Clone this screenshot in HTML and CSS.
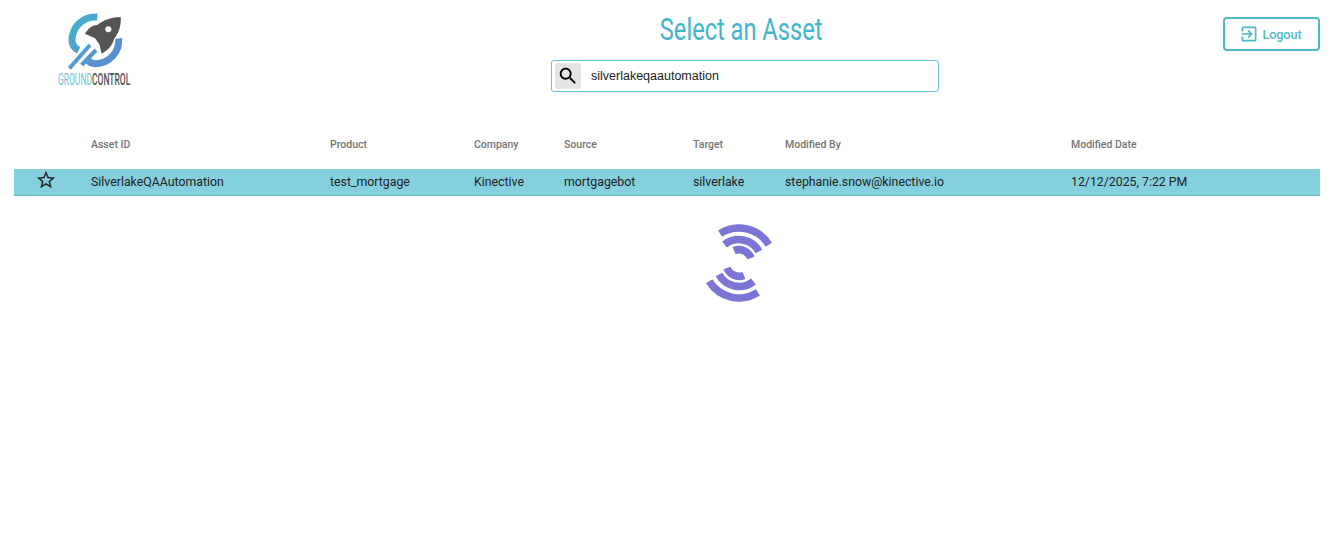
FILE: index.html
```html
<!DOCTYPE html>
<html lang="en">
<head>
    <meta charset="UTF-8">
    <meta name="viewport" content="width=device-width, initial-scale=1.0">
    <title>Select an Asset</title>
    <link rel="stylesheet" href="styles.css">
</head>
<body>
    <header class="page-header">
        <div class="logo">
            <svg class="logo-mark" viewBox="0 0 330 195" aria-hidden="true">
                <defs>
                    <linearGradient id="logoBlue" gradientUnits="userSpaceOnUse" x1="85" y1="40" x2="240" y2="185">
                        <stop offset="0" stop-color="#45b2cd"/>
                        <stop offset="1" stop-color="#5f86d3"/>
                    </linearGradient>
                </defs>
                <g fill="none" stroke="url(#logoBlue)">
                    <path stroke-width="21" d="M172 36 A70 70 0 0 0 96 106 C96 120 104 130 116 136"/>
                    <path stroke-width="21" d="M236 100 A70 70 0 0 1 166 176 C155 176 148 172 142 165"/>
                    <path stroke-width="12" d="M88 190 L150 120"/>
                    <path stroke-width="12" d="M125 180 L168 135"/>
                </g>
                <path class="logo-rocket" d="M242 36 C244 62 236 84 222 102 C218 120 205 135 185 146 L178 118 L165 100 L135 86 C145 70 158 60 172 60 C190 45 215 36 242 36 Z"/>
                <circle cx="205" cy="73" r="9" fill="#fff"/>
            </svg>
            <div class="logo-text"><span class="logo-ground">GROUND</span><span class="logo-control">CONTROL</span></div>
        </div>
        <div class="header-center">
            <h1 class="page-title">Select an Asset</h1>
            <div class="search-box">
                <span class="search-icon">
                    <svg viewBox="0 0 24 24" width="22" height="22"><path d="M15.5 14h-.79l-.28-.27C15.41 12.59 16 11.11 16 9.5 16 5.91 13.09 3 9.5 3S3 5.91 3 9.5 5.91 16 9.5 16c1.61 0 3.09-.59 4.23-1.57l.27.28v.79l5 4.99L20.49 19l-4.99-5zm-6 0C7.01 14 5 11.99 5 9.5S7.01 5 9.5 5 14 7.01 14 9.5 11.99 14 9.5 14z"/></svg>
                </span>
                <input class="search-input" type="text" value="silverlakeqaautomation">
            </div>
        </div>
        <button class="logout-btn" type="button">
            <svg viewBox="0 0 24 24" width="20" height="20"><path d="M10.09 15.59L11.5 17l5-5-5-5-1.41 1.41L12.67 11H3v2h9.67l-2.58 2.59zM19 3H5c-1.11 0-2 .9-2 2v4h2V5h14v14H5v-4H3v4c0 1.1.89 2 2 2h14c1.1 0 2-.9 2-2V5c0-1.1-.9-2-2-2z"/></svg>
            Logout
        </button>
    </header>

    <main class="asset-list">
        <div class="asset-row asset-head">
            <div></div>
            <div>Asset ID</div>
            <div>Product</div>
            <div>Company</div>
            <div>Source</div>
            <div>Target</div>
            <div>Modified By</div>
            <div>Modified Date</div>
        </div>
        <div class="asset-row asset-item">
            <div class="star-cell">
                <svg viewBox="0 0 24 24" width="22" height="22"><path d="M22 9.24l-7.19-.62L12 2 9.19 8.63 2 9.24l5.46 4.73L5.82 21 12 17.27 18.18 21l-1.63-7.03L22 9.24zM12 15.4l-3.76 2.27 1-4.28-3.32-2.88 4.38-.38L12 6.1l1.71 4.04 4.38.38-3.32 2.88 1 4.28L12 15.4z"/></svg>
            </div>
            <div>SilverlakeQAAutomation</div>
            <div>test_mortgage</div>
            <div>Kinective</div>
            <div>mortgagebot</div>
            <div>silverlake</div>
            <div>stephanie.snow@kinective.io</div>
            <div>12/12/2025, 7:22 PM</div>
        </div>
        <div class="spinner">
            <svg viewBox="0 0 80 80" width="80" height="80" aria-hidden="true">
                <g id="arcs" fill="none" stroke="#7b75d6" stroke-width="7.5">
                    <path d="M21.1 10.6 A35 35 0 0 1 69.8 21.7"/>
                    <path d="M25.5 21.5 A23 23 0 0 1 60 28.5"/>
                    <path d="M35 27.6 A13 13 0 0 1 52 35"/>
                </g>
                <use href="#arcs" transform="rotate(180 40 40)"/>
            </svg>
        </div>
    </main>
</body>
</html>
```

FILE: styles.css
```css
body {
    font-family: Roboto, Arial, sans-serif;
    background-color: #fff;
    margin: 0;
    color: #212121;
}
.page-header {
    display: flex;
    align-items: flex-start;
    height: 124px;
    padding-right: 24px;
}
.logo {
    width: 110px;
    margin-left: 40px;
    padding-top: 5px;
}
.logo-mark {
    display: block;
    width: 110px;
    height: 65px;
}
.logo-text {
    width: max-content;
    margin: 2px 0 0 18px;
    font-size: 16.5px;
    line-height: 16px;
    white-space: nowrap;
    transform: scaleX(0.515);
    transform-origin: left center;
}
.logo-ground {
    color: #6cc4d2;
    font-weight: 400;
}
.logo-control {
    color: #555;
    font-weight: 500;
}
.logo-rocket {
    fill: #555;
}
.header-center {
    flex: 1;
    display: flex;
    flex-direction: column;
    align-items: center;
    padding-left: 117px;
}
.page-title {
    margin: 9px 8px 0 0;
    font-size: 32px;
    line-height: 40px;
    font-weight: 400;
    color: #43b5ca;
    transform: scaleX(0.738);
    white-space: nowrap;
}
.search-box {
    display: flex;
    align-items: center;
    box-sizing: border-box;
    width: 388px;
    height: 32px;
    margin-top: 11px;
    padding: 2px 3px;
    border: 1px solid #63c3d3;
    border-radius: 3px;
}
.search-icon {
    display: flex;
    align-items: center;
    justify-content: center;
    width: 26px;
    height: 26px;
    background-color: #e4e4e4;
    border-radius: 3px;
}
.search-input {
    flex: 1;
    margin: -1px 0 0 10px;
    padding: 0;
    border: none;
    outline: none;
    font-family: "Liberation Sans", Arial, sans-serif;
    font-size: 12.5px;
    color: #222;
}
.logout-btn {
    display: flex;
    align-items: center;
    justify-content: center;
    gap: 3px;
    box-sizing: border-box;
    width: 97px;
    height: 34px;
    margin-top: 17px;
    padding: 0 2px 0 0;
    background: #fff;
    border: 2px solid #4fb8cb;
    border-radius: 4px;
    font-family: Roboto, Arial, sans-serif;
    font-size: 12.5px;
    font-weight: 500;
    color: #4fb8cb;
    cursor: pointer;
}
.logout-btn svg {
    fill: #4fb8cb;
}
.asset-list {
    padding: 0 24.5px 0 14px;
}
.asset-row {
    display: grid;
    grid-template-columns: 77px 239px 144px 90px 129px 92px 286px 1fr;
    align-items: center;
}
.asset-head {
    box-sizing: border-box;
    height: 45px;
    padding-bottom: 5px;
    font-size: 10.5px;
    font-weight: 500;
    color: #757575;
}
.asset-item {
    height: 27px;
    box-sizing: border-box;
    background-color: #84d0de;
    border-bottom: 1px solid #5fb4c3;
    font-size: 12.32px;
}
.star-cell {
    display: flex;
    justify-content: center;
    width: 64px;
    margin-top: -5px;
}
.star-cell svg {
    fill: #212121;
}
.spinner {
    display: flex;
    justify-content: center;
    margin: 27px 0 0 145px;
}
```
